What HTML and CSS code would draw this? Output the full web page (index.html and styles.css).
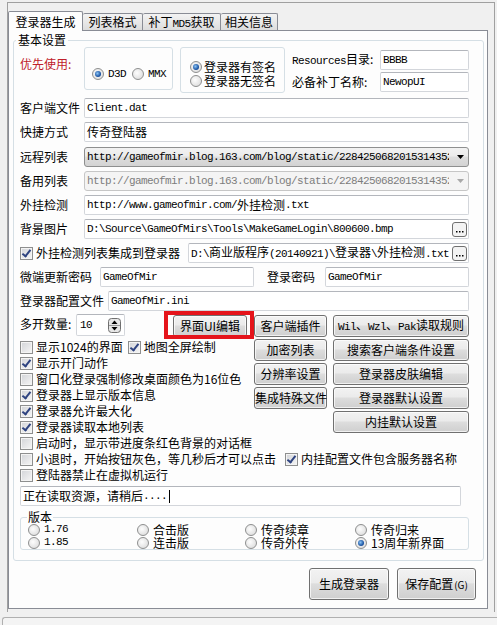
FILE: index.html
```html
<!DOCTYPE html>
<html lang="zh-CN">
<head>
  <meta charset="UTF-8">
  <title>登录器生成</title>
  <link rel="stylesheet" href="styles.css">
</head>
<body>

  <div class="frame">
    <div class="tabs">
      <div class="tab active t1">登录器生成</div>
      <div class="tab t2">列表格式</div>
      <div class="tab t3">补丁<span class="mono">MD5</span>获取</div>
      <div class="tab t4">相关信息</div>
    </div>

    <div class="page">
      <fieldset class="group main">
        <legend>基本设置</legend>

        <div class="top">
          <span class="prio">优先使用:</span>
          <div class="box box-mode">
            <span class="opt"><span class="rd on"></span><span class="mono">D3D</span></span>
            <span class="opt"><span class="rd"></span><span class="mono">MMX</span></span>
          </div>
          <div class="box box-sign">
            <span class="opt"><span class="rd on"></span>登录器有签名</span>
            <span class="opt"><span class="rd"></span>登录器无签名</span>
          </div>
          <div class="res">
            <span class="mono">Resources<span class="cn">目录:</span></span>
            <div class="edit mono">BBBB</div>
            <span>必备补丁名称:</span>
            <div class="edit mono">NewopUI</div>
          </div>
        </div>

        <div class="rows">
          <div class="row">
            <span class="lbl">客户端文件</span>
            <div class="edit mono">Client.dat</div>
          </div>
          <div class="row">
            <span class="lbl">快捷方式</span>
            <div class="edit"><span class="cn">传奇登陆器</span></div>
          </div>
          <div class="row row-shift">
            <span class="lbl">远程列表</span>
            <div class="combo mono">
              <span class="txt">http://gameofmir.blog.163.com/blog/static/2284250682015314352</span>
              <svg width="7" height="4" viewBox="0 0 7 4"><path d="M0 0H7L3.5 4Z" fill="#000"/></svg>
            </div>
          </div>
          <div class="row">
            <span class="lbl">备用列表</span>
            <div class="combo off mono">
              <span class="txt">http://gameofmir.blog.163.com/blog/static/2284250682015314352</span>
              <svg width="7" height="4" viewBox="0 0 7 4"><path d="M0 0H7L3.5 4Z" fill="#a8a8a8"/></svg>
            </div>
          </div>
          <div class="row">
            <span class="lbl">外挂检测</span>
            <div class="edit mono">http://www.gameofmir.com/<span class="cn">外挂检测</span>.txt</div>
          </div>
          <div class="row">
            <span class="lbl">背景图片</span>
            <div class="edit mono">
              <span class="txt">D:\Source\GameOfMirs\Tools\MakeGameLogin\800600.bmp</span>
              <svg class="more" width="15" height="15" viewBox="0 0 15 15"><rect x="0.5" y="0.5" width="14" height="14" rx="2.5" fill="#f3f3f3" stroke="#707070"/><rect x="4" y="9" width="1.5" height="1.5" fill="#000"/><rect x="7" y="9" width="1.5" height="1.5" fill="#000"/><rect x="10" y="9" width="1.5" height="1.5" fill="#000"/></svg>
            </div>
          </div>
          <div class="row">
            <span class="chk chk-int"><span class="cb on"></span>外挂检测列表集成到登录器</span>
            <div class="edit mono">
              <span class="txt">D:\<span class="cn">商业版程序</span>(20140921)\<span class="cn">登录器</span>\<span class="cn">外挂检测</span>.txt</span>
              <svg class="more" width="15" height="15" viewBox="0 0 15 15"><rect x="0.5" y="0.5" width="14" height="14" rx="2.5" fill="#f3f3f3" stroke="#707070"/><rect x="4" y="9" width="1.5" height="1.5" fill="#000"/><rect x="7" y="9" width="1.5" height="1.5" fill="#000"/><rect x="10" y="9" width="1.5" height="1.5" fill="#000"/></svg>
            </div>
          </div>
          <div class="row">
            <span class="lbl lbl-pw">微端更新密码</span>
            <div class="edit mono edit-pw">GameOfMir</div>
            <span class="lbl lbl-login">登录密码</span>
            <div class="edit mono">GameOfMir</div>
          </div>
          <div class="row">
            <span class="lbl lbl-cfg">登录器配置文件</span>
            <div class="edit mono">GameOfMir.ini</div>
          </div>
        </div>

        <div class="lower">
          <div class="left">
            <div class="multi">
              <span class="multi-lbl">多开数量:</span>
              <div class="spin">
                <span class="mono">10</span>
                <svg width="13" height="15" viewBox="0 0 13 15"><rect x="0.5" y="0.5" width="12" height="14" rx="3" fill="#e6e6e6" stroke="#6f6f6f"/><path d="M1 7.5H12" stroke="#9a9a9a"/><path d="M3.5 6L6.5 2.5L9.5 6Z" fill="#000"/><path d="M3.5 9L6.5 12.5L9.5 9Z" fill="#000"/></svg>
              </div>
              <span class="hl"><button class="btn btn-ui">界面UI编辑</button></span>
            </div>
            <div class="chk">
              <span class="cb"></span>显示1024的界面
              <span class="cb on cb-gap"></span>地图全屏绘制
            </div>
            <div class="chk"><span class="cb on"></span>显示开门动作</div>
            <div class="chk"><span class="cb"></span>窗口化登录强制修改桌面颜色为16位色</div>
            <div class="chk"><span class="cb on"></span>登录器上显示版本信息</div>
            <div class="chk"><span class="cb on"></span>登录器允许最大化</div>
            <div class="chk"><span class="cb on"></span>登录器读取本地列表</div>
          </div>

          <div class="col col-a">
            <button class="btn">客户端插件</button>
            <button class="btn">加密列表</button>
            <button class="btn">分辨率设置</button>
            <button class="btn">集成特殊文件</button>
          </div>
          <div class="col col-b">
            <button class="btn"><span class="mono">Wil<span class="cn">、</span>Wzl<span class="cn">、</span>Pak<span class="cn">读取规则</span></span></button>
            <button class="btn">搜索客户端条件设置</button>
            <button class="btn">登录器皮肤编辑</button>
            <button class="btn">登录器默认设置</button>
            <button class="btn">内挂默认设置</button>
          </div>
        </div>

        <div class="chk"><span class="cb"></span>启动时，显示带进度条红色背景的对话框</div>
        <div class="chk">
          <span class="cb"></span>小退时，开始按钮灰色，等几秒后才可以点击
          <span class="cb on cb-gap2"></span>内挂配置文件包含服务器名称
        </div>
        <div class="chk"><span class="cb"></span>登陆器禁止在虚拟机运行</div>

        <div class="memo">正在读取资源，请稍后<span class="mono">....</span><span class="caret"></span></div>

        <fieldset class="group ver">
          <legend>版本</legend>
          <div class="ver-grid">
            <span class="opt"><span class="rd"></span><span class="mono">1.76</span></span>
            <span class="opt"><span class="rd"></span>合击版</span>
            <span class="opt"><span class="rd"></span>传奇续章</span>
            <span class="opt"><span class="rd"></span>传奇归来</span>
            <span class="opt"><span class="rd"></span><span class="mono">1.85</span></span>
            <span class="opt"><span class="rd"></span>连击版</span>
            <span class="opt"><span class="rd"></span>传奇外传</span>
            <span class="opt"><span class="rd on"></span>13周年新界面</span>
          </div>
        </fieldset>
      </fieldset>

      <div class="foot">
        <button class="btn btn-big btn-make">生成登录器</button>
        <button class="btn btn-big btn-save">保存配置<span class="small">(G)</span></button>
      </div>
    </div>
  </div>

  <div class="status"></div>

</body>
</html>
```

FILE: styles.css
```css
body {
  margin: 0;
  width: 497px;
  height: 625px;
  overflow: hidden;
  background: #f0f0f0;
  font-family: "Noto Sans CJK SC", "Noto Sans", sans-serif;
  font-size: 12px;
  line-height: 14px;
  color: #000;
}

.mono {
  font-family: "Liberation Mono", "Noto Sans CJK SC", monospace;
  font-size: 11px;
  letter-spacing: -0.6px;
}

.cn {
  font-family: "Noto Sans CJK SC", sans-serif;
  font-size: 12px;
  letter-spacing: 0;
}

/* outer panel */
.frame {
  box-sizing: border-box;
  width: 488px;
  height: 610px;
  margin: 2px 0 0 7px;
  padding-top: 8px;
  border: 1px solid #a0a0a0;
  border-bottom: none;
}

.tabs {
  display: flex;
  align-items: flex-end;
  height: 19px;
}

.tab {
  box-sizing: border-box;
  height: 17px;
  border: 1px solid #898c95;
  border-left: none;
  border-bottom: none;
  border-radius: 2px 2px 0 0;
  background: linear-gradient(#f3f3f3, #e8e8e8 50%, #dcdcdc);
  text-align: center;
  line-height: 16px;
  white-space: nowrap;
}

.tab.active {
  position: relative;
  z-index: 1;
  height: 20px;
  margin-bottom: -1px;
  border-left: 1px solid #898c95;
  background: #fdfdfd;
  line-height: 19px;
}

.t1 { width: 75px; }
.t2 { width: 60px; }
.t3 { width: 78px; }
.t4 { width: 57px; }

.page {
  box-sizing: border-box;
  width: 480px;
  height: 579px;
  padding: 0 3px 0 4px;
  border: 1px solid #898c95;
  background: #fdfdfd;
}

.group {
  min-width: 0;
  border: 1px solid #d5dfe5;
  border-radius: 3px;
}

.main {
  margin: 2px 0 0;
  padding: 0 14px 10px 6px;
}

.main > legend {
  margin-left: -4px;
  padding: 0 2px;
  line-height: 14px;
}

/* first row */
.top {
  display: flex;
  align-items: flex-start;
  height: 46px;
}

.prio {
  width: 64px;
  margin-top: 10px;
  color: #c0202a;
}

.box {
  box-sizing: border-box;
  border: 1px solid #d5dfe5;
  border-radius: 3px;
}

.box-mode {
  display: flex;
  align-items: center;
  width: 89px;
  height: 43px;
  padding: 10px 0 0 7px;
}

.box-mode .opt:first-child { margin-right: 6px; }

.box-sign {
  display: flex;
  flex-direction: column;
  width: 105px;
  height: 46px;
  margin-left: 7px;
  padding: 12px 0 0 9px;
}

.box-sign .opt { gap: 2px; }

.opt {
  display: flex;
  align-items: center;
  gap: 4px;
  white-space: nowrap;
}

.res {
  display: grid;
  grid-template-columns: 88px 89px;
  row-gap: 2px;
  align-items: center;
  margin: 3px 0 0 7px;
}

/* form rows */
.rows {
  display: flex;
  flex-direction: column;
  gap: 4px;
  margin-top: 5px;
}

.row {
  display: flex;
  align-items: center;
  height: 20px;
}

.row-shift { margin-top: 1px; }

.lbl {
  flex: none;
  width: 64px;
  white-space: nowrap;
}

.lbl-pw { width: 80px; }
.lbl-login { width: 58px; margin-left: 13px; }
.lbl-cfg { width: 88px; }

.edit,
.combo,
.memo {
  box-sizing: border-box;
  display: flex;
  align-items: center;
  height: 20px;
  padding: 0 1px 0 2px;
  border: 1px solid #d3d6db;
  border-top-color: #b3b6bc;
  border-radius: 2px;
  background: #fff;
  white-space: nowrap;
}

.row .edit,
.row .combo { flex: 1; min-width: 0; }

.row .edit-pw { flex: none; width: 154px; }

.txt {
  flex: 1;
  min-width: 0;
  overflow: hidden;
  white-space: nowrap;
  line-height: 18px;
}

.more { flex: none; }

.combo {
  padding-right: 4px;
  border: 1px solid #8e8f8f;
  border-radius: 3px;
  background: linear-gradient(#f2f2f2, #ebebeb 45%, #dddddd 50%, #d3d3d3);
}

.combo .txt { flex: none; width: 362px; }

.combo svg { flex: none; margin-left: auto; }

.combo.off {
  border-color: #c6c6c6;
  background: #f4f4f4;
  color: #7d7d7d;
}

/* check boxes and radios */
.chk {
  display: flex;
  align-items: center;
  height: 16px;
  white-space: nowrap;
}

.cb {
  position: relative;
  flex: none;
  box-sizing: border-box;
  width: 13px;
  height: 13px;
  margin-right: 3px;
  border: 1px solid #8e8f8f;
  background: linear-gradient(135deg, #d2d4d8, #f6f6f6);
  box-shadow: inset 0 0 0 1px #f4f4f4;
}

.cb.on::after {
  content: "";
  position: absolute;
  left: 3px;
  top: 0;
  width: 3px;
  height: 7px;
  border: solid #2e4380;
  border-width: 0 2px 2px 0;
  transform: rotate(38deg);
}

.cb-gap { margin-left: 5px; }
.cb-gap2 { margin-left: 9px; }

.chk-int { width: 168px; flex: none; }

.rd {
  position: relative;
  flex: none;
  box-sizing: border-box;
  width: 12px;
  height: 12px;
  border: 1px solid #8e8f8f;
  border-radius: 50%;
  background: radial-gradient(circle at 40% 40%, #fdfdfd, #d6d6d6);
}

.rd.on::after {
  content: "";
  position: absolute;
  left: 2px;
  top: 2px;
  width: 6px;
  height: 6px;
  border-radius: 50%;
  background: radial-gradient(circle at 40% 40%, #8cc4f4, #1d57a6 60%, #10397a);
}

/* lower block */
.lower {
  display: flex;
  margin-top: 4px;
}

.left {
  flex: none;
  width: 234px;
}

.multi {
  display: flex;
  align-items: flex-start;
  height: 24px;
}

.multi-lbl {
  width: 56px;
  line-height: 18px;
}

.spin {
  box-sizing: border-box;
  display: flex;
  align-items: center;
  justify-content: space-between;
  width: 49px;
  height: 22px;
  margin-top: -1px;
  padding: 0 3px 0 3px;
  border: 1px solid #d3d6db;
  border-top-color: #b3b6bc;
  border-radius: 2px;
  background: #fff;
}

.hl {
  position: relative;
  margin: 0 7px 0 auto;
}

.hl::after {
  content: "";
  position: absolute;
  left: -9px;
  right: -7px;
  top: -4px;
  bottom: -2px;
  border: 4px solid #e5141b;
}

.btn {
  box-sizing: border-box;
  display: block;
  height: 22px;
  padding: 0;
  border: 1px solid #707070;
  border-radius: 3px;
  background: linear-gradient(#f2f2f2, #ebebeb 45%, #dddddd 50%, #cfcfcf);
  box-shadow: inset 0 0 0 1px rgba(255, 255, 255, 0.7);
  font: inherit;
  color: #000;
  white-space: nowrap;
}

.btn-ui { width: 74px; }

.col {
  display: flex;
  flex-direction: column;
  gap: 2px;
}

.col-a { width: 73px; }
.col-b { width: 136px; margin-left: 6px; }

.memo {
  width: 441px;
  margin-top: 3px;
  padding-left: 2px;
}

.caret {
  display: inline-block;
  width: 1px;
  height: 13px;
  margin-left: 2px;
  background: #000;
}

.ver {
  margin: 5px 0 0;
  padding: 0 0 0 7px;
}

.ver > legend {
  margin-left: -1px;
  padding: 0 1px;
  line-height: 12px;
}

.ver-grid {
  display: grid;
  grid-template-columns: 109px 108px 110px 1fr;
  grid-auto-rows: 13px;
  line-height: 13px;
}

.foot {
  display: flex;
  justify-content: flex-end;
  gap: 8px;
  margin: 7px 8px 0 0;
}

.btn-big { height: 32px; }
.btn-make { width: 80px; }
.btn-save { width: 79px; }

.small { font-size: 10px; margin-left: 1px; }

.status {
  box-sizing: border-box;
  height: 9px;
  margin: 5px 0 0 2px;
  border-top: 1px solid #b0b0b0;
  border-left: 1px solid #b0b0b0;
  border-radius: 3px 0 0 0;
  background: #f4f4f4;
}
```
